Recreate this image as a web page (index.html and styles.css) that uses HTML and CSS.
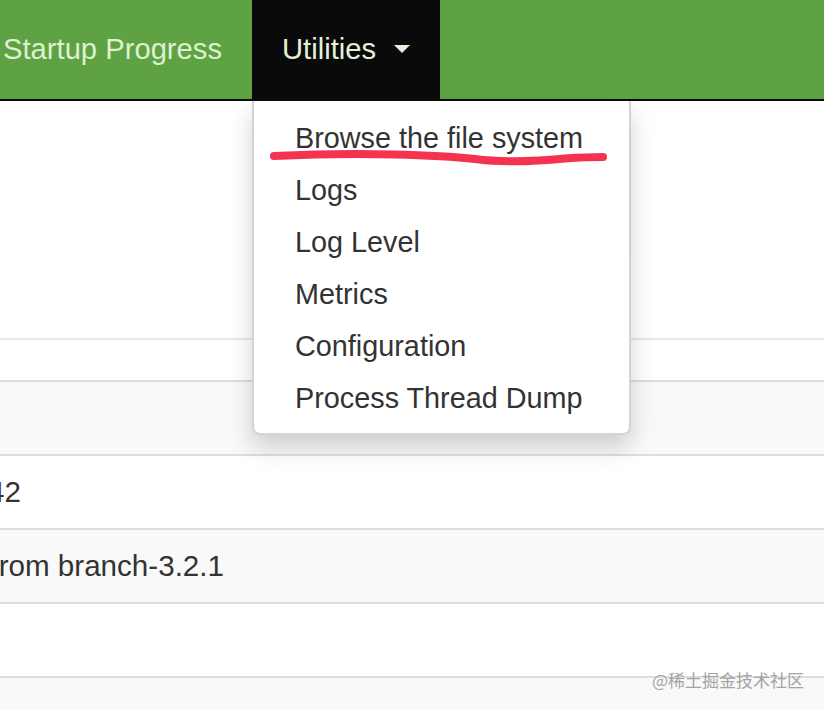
FILE: index.html
```html
<!DOCTYPE html>
<html lang="en">
<head>
<meta charset="utf-8">
<title>Hadoop - Utilities</title>
<link rel="stylesheet" href="styles.css">
</head>
<body>
<header class="navbar">
  <ul class="nav">
    <li class="nav-item"><a class="nav-link" href="#">Startup Progress</a></li>
    <li class="nav-item dropdown">
      <a class="nav-link active" href="#">Utilities <span class="caret"></span></a>
      <ul class="dropdown-menu">
        <li><a href="#">Browse the file system</a></li>
        <li><a href="#">Logs</a></li>
        <li><a href="#">Log Level</a></li>
        <li><a href="#">Metrics</a></li>
        <li><a href="#">Configuration</a></li>
        <li><a href="#">Process Thread Dump</a></li>
      </ul>
    </li>
  </ul>
</header>
<main class="content">
  <div class="page-header"></div>
  <table class="table">
    <tbody>
      <tr><td></td></tr>
      <tr><td><div class="clip clip-version"><span>3.2.1, rb3cbbb467e22ea829b3808f4b7b01d07e0bf3842</span></div></td></tr>
      <tr><td><div class="clip clip-compiled"><span>Tue Sep 10 23:56:00 +0800 2019 by rohithsharmaks from branch-3.2.1</span></div></td></tr>
      <tr><td></td></tr>
      <tr><td></td></tr>
    </tbody>
  </table>
</main>
<svg class="annotation" width="824" height="710" viewBox="0 0 824 710" aria-hidden="true">
  <path d="M274 156 C 360 152, 440 155, 475 159 C 505 163, 540 161, 565 158.5 C 580 157.5, 595 157, 603 157" fill="none" stroke="#f4344f" stroke-width="8" stroke-linecap="round"/>
</svg>
<div class="watermark">@稀土掘金技术社区</div>
</body>
</html>
```

FILE: styles.css
```css
html, body {
  margin: 0;
  height: 100%;
  overflow: hidden;
  background: #fff;
  font-family: "Liberation Sans", Arial, Helvetica, sans-serif;
  color: #333;
}

.navbar {
  height: 99px;
  background: #5fa243;
  border-bottom: 2px solid #0b0b0b;
  position: relative;
  z-index: 2;
}

.nav {
  display: flex;
  margin: 0 0 0 -27px;
  padding: 0;
  list-style: none;
  height: 99px;
}

.nav-item {
  position: relative;
}

.nav-link {
  display: block;
  height: 99px;
  line-height: 99px;
  padding: 0 30px;
  font-size: 29.2px;
  color: #dcf1cf;
  text-decoration: none;
  white-space: nowrap;
}

.nav-link.active {
  background: #0a0a0a;
  color: #e2f2d8;
}

.caret {
  display: inline-block;
  width: 0;
  height: 0;
  margin-left: 10px;
  vertical-align: middle;
  position: relative;
  top: -2px;
  border-top: 8px solid #e2f2d8;
  border-left: 8px solid transparent;
  border-right: 8px solid transparent;
}

.dropdown-menu {
  position: absolute;
  top: calc(100% + 2px);
  left: 0;
  box-sizing: border-box;
  width: 379px;
  margin: 0;
  padding: 11px 0 9px;
  list-style: none;
  background: #fff;
  border: 2px solid rgba(0, 0, 0, 0.17);
  border-top: 0;
  border-radius: 0 0 8px 8px;
  box-shadow: 0 12px 24px rgba(0, 0, 0, 0.175);
}

.dropdown-menu a {
  display: block;
  padding: 6px 40px 6px 41px;
  line-height: 40px;
  font-size: 28.8px;
  color: #333;
  text-decoration: none;
  white-space: nowrap;
}

.content {
  position: relative;
  z-index: 1;
}

.page-header {
  height: 237px;
  border-bottom: 2px solid #e8e8e8;
  margin-bottom: 40px;
}

.table {
  width: 100%;
  border-collapse: collapse;
}

.table td {
  border-top: 2px solid #ddd;
  padding: 16px 0;
  height: 40px;
  line-height: 40px;
  font-size: 29.6px;
  color: #333;
}

.table tr:nth-child(odd) td {
  background: #f9f9f9;
}

.clip {
  display: flex;
  justify-content: flex-end;
  overflow: hidden;
  white-space: nowrap;
}

.clip span {
  flex: none;
}

.clip-version {
  width: 21px;
}

.clip-compiled {
  width: 224px;
}

.annotation {
  position: absolute;
  top: 0;
  left: 0;
  z-index: 3;
  pointer-events: none;
}

.watermark {
  position: absolute;
  right: 20px;
  top: 667px;
  z-index: 4;
  font-family: "Noto Sans CJK SC", "Liberation Sans", sans-serif;
  font-size: 17px;
  line-height: 26px;
  color: #a3a3a3;
  white-space: nowrap;
}
```
